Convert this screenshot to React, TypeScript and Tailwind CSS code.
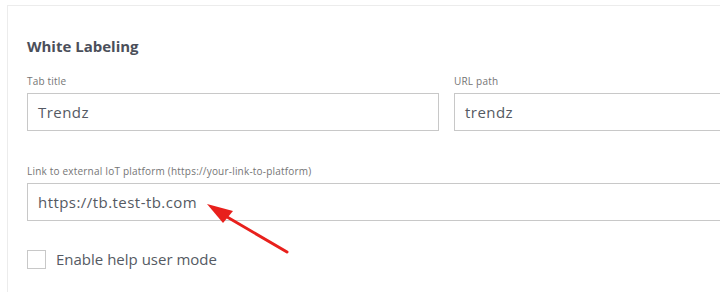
import React from "react";

const Field: React.FC<{ label: string; value: string; className?: string }> = ({
  label,
  value,
  className = "",
}) => (
  <div className={`flex flex-col ${className}`}>
    <label className="text-[10px] leading-[14px] text-[#757575] tracking-[0.2px]">{label}</label>
    <div className="mt-[5px] h-[38px] border border-[#c8c8c8] bg-white flex items-center px-[10px] text-[15px] text-[#555a63] tracking-[0.45px]">
      {value}
    </div>
  </div>
);

const App: React.FC = () => {
  return (
    <div
      className="relative w-[720px] h-[292px] overflow-hidden bg-white"
      style={{ fontFamily: '"Open Sans", sans-serif' }}
    >
      <div className="mt-[5px] ml-[7px] w-[900px] h-[320px] border-l border-t border-[#ececec] pl-[19px] pt-[29px]">
        <h2 className="text-[15px] leading-[22px] font-bold text-[#4b4f5a]">White Labeling</h2>

        {/* Tab title / URL path */}
        <div className="mt-[17px] flex gap-[15px]">
          <Field label="Tab title" value="Trendz" className="w-[412px]" />
          <Field label="URL path" value="trendz" className="w-[412px]" />
        </div>

        {/* External link */}
        <Field
          label="Link to external IoT platform (https://your-link-to-platform)"
          value="https://tb.test-tb.com"
          className="mt-[33px] w-[839px]"
        />

        {/* Help mode */}
        <div className="mt-[27px] flex items-center gap-[10px]">
          <div className="w-[19px] h-[19px] border border-[#c8c8c8] bg-white" />
          <span className="text-[15px] text-[#555a63]">Enable help user mode</span>
        </div>
      </div>

      {/* Annotation arrow */}
      <svg className="absolute left-0 top-0 pointer-events-none" width="720" height="292">
        <line x1="287" y1="252" x2="222" y2="214" stroke="#e8201c" strokeWidth="3" strokeLinecap="round" />
        <polygon points="207,204 233,211 223,223" fill="#e8201c" />
      </svg>
    </div>
  );
};

export default App;
